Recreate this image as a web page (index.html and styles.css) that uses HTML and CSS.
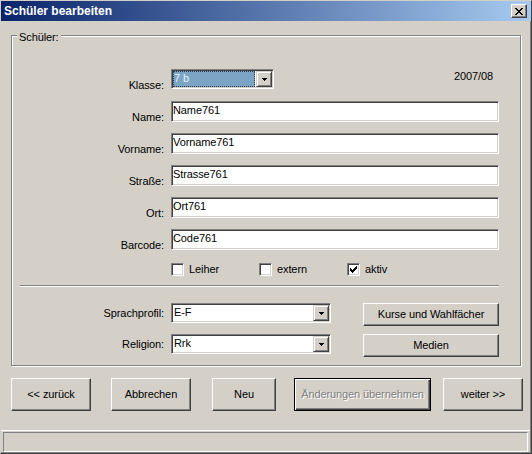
FILE: index.html
```html
<!DOCTYPE html>
<html>
<head>
<meta charset="utf-8">
<title>Schüler bearbeiten</title>
<link rel="stylesheet" href="styles.css">
</head>
<body>
<div class="window">
  <div class="titlebar">
    <span class="title">Schüler bearbeiten</span>
    <div class="close">
      <svg width="8" height="7" viewBox="0 0 8 7" shape-rendering="crispEdges"><path fill="#000" d="M0 0h2v1H0z M6 0h2v1H6z M1 1h2v1H1z M5 1h2v1H5z M2 2h4v1H2z M3 3h2v1H3z M2 4h4v1H2z M1 5h2v1H1z M5 5h2v1H5z M0 6h2v1H0z M6 6h2v1H6z"/></svg>
    </div>
  </div>
  <div class="client">
    <div class="group">
      <div class="legend">Schüler:</div>
      <div class="rows">
        <div class="row">
          <div class="lbl">Klasse:</div>
          <div class="combo combo-klasse">
            <div class="combo-text sel"><span>7 b</span></div>
            <div class="ddbtn"><svg width="5" height="3" viewBox="0 0 5 3" shape-rendering="crispEdges"><path fill="#000" d="M0 0h5v1H0z M1 1h3v1H1z M2 2h1v1H2z"/></svg></div>
          </div>
          <div class="year">2007/08</div>
        </div>
        <div class="row"><div class="lbl">Name:</div><div class="edit">Name761</div></div>
        <div class="row"><div class="lbl">Vorname:</div><div class="edit">Vorname761</div></div>
        <div class="row"><div class="lbl">Straße:</div><div class="edit">Strasse761</div></div>
        <div class="row"><div class="lbl">Ort:</div><div class="edit">Ort761</div></div>
        <div class="row"><div class="lbl">Barcode:</div><div class="edit">Code761</div></div>
      </div>
      <div class="checks">
        <div class="chk"><span class="box"></span><span>Leiher</span></div>
        <div class="chk"><span class="box"></span><span>extern</span></div>
        <div class="chk"><span class="box"><svg width="7" height="7" viewBox="0 0 7 7" shape-rendering="crispEdges"><path fill="#000" d="M6 0h1v1H6z M5 1h2v1H5z M0 2h1v1H0z M4 2h3v1H4z M0 3h2v1H0z M3 3h3v1H3z M0 4h5v1H0z M1 5h3v1H1z M2 6h1v1H2z"/></svg></span><span>aktiv</span></div>
      </div>
      <div class="sep"></div>
      <div class="lower">
        <div class="lbl2">Sprachprofil:</div>
        <div class="combo combo-wide">
          <div class="combo-text">E-F</div>
          <div class="ddbtn"><svg width="5" height="3" viewBox="0 0 5 3" shape-rendering="crispEdges"><path fill="#000" d="M0 0h5v1H0z M1 1h3v1H1z M2 2h1v1H2z"/></svg></div>
        </div>
        <div class="btn btn-side">Kurse und Wahlfächer</div>
        <div class="lbl2">Religion:</div>
        <div class="combo combo-wide">
          <div class="combo-text">Rrk</div>
          <div class="ddbtn"><svg width="5" height="3" viewBox="0 0 5 3" shape-rendering="crispEdges"><path fill="#000" d="M0 0h5v1H0z M1 1h3v1H1z M2 2h1v1H2z"/></svg></div>
        </div>
        <div class="btn btn-side">Medien</div>
      </div>
    </div>
    <div class="actions">
      <div class="btn act act-back">&lt;&lt; zurück</div>
      <div class="btn act act-cancel">Abbrechen</div>
      <div class="btn act act-new">Neu</div>
      <div class="btn act act-apply default disabled">Änderungen übernehmen</div>
      <div class="btn act act-next">weiter &gt;&gt;</div>
    </div>
    <div class="status-line"></div>
    <div class="status"></div>
  </div>
</div>
</body>
</html>
```

FILE: styles.css
```css
html, body {
  margin: 0;
  padding: 0;
}
body {
  width: 532px;
  height: 454px;
  overflow: hidden;
  background: #D4D0C8;
  font-family: "Liberation Sans", Arial, sans-serif;
  font-size: 11px;
  line-height: 13px;
  letter-spacing: -0.1px;
  color: #000;
}
.window {
  box-sizing: border-box;
  width: 532px;
  height: 454px;
  border-style: solid;
  border-width: 1px;
  border-color: #D4D0C8 #404040 #404040 #D4D0C8;
  background: #D4D0C8;
  display: flex;
  flex-direction: column;
}
.titlebar {
  height: 20px;
  flex: none;
  display: flex;
  align-items: center;
  background: linear-gradient(to right, #0A246A, #A6CAF0);
}
.title {
  padding-left: 3px;
  color: #fff;
  font-weight: bold;
  font-size: 12px;
  letter-spacing: 0;
  flex: 1;
}
.close {
  box-sizing: border-box;
  width: 16px;
  height: 14px;
  margin-right: 4px;
  background: #D4D0C8;
  border: 1px solid;
  border-color: #fff #404040 #404040 #fff;
  box-shadow: inset -1px -1px #808080;
  display: flex;
  align-items: center;
  justify-content: center;
  padding-right: 1px;
}
.close svg { display: block; }
.client {
  flex: 1;
  display: flex;
  flex-direction: column;
  border-right: 1px solid #808080;
  border-bottom: 1px solid #808080;
}
.group {
  position: relative;
  box-sizing: border-box;
  margin: 14px 0 0 10px;
  width: 510px;
  height: 331px;
  flex: none;
  border: 1px solid #808080;
  box-shadow: inset 1px 1px #fff, 1px 1px #fff;
  padding: 33px 20px 8px 8px;
  display: flex;
  flex-direction: column;
}
.legend {
  position: absolute;
  left: 5px;
  top: -5px;
  padding: 0 2px;
  background: #D4D0C8;
}
.rows {
  display: flex;
  flex-direction: column;
  gap: 11px;
}
.row {
  display: flex;
  height: 21px;
}
.lbl {
  flex: none;
  width: 144px;
  margin-right: 7px;
  text-align: right;
  padding-top: 10px;
}
.edit {
  box-sizing: border-box;
  width: 328px;
  height: 21px;
  background: #fff;
  border: 1px solid;
  border-color: #808080 #fff #fff #808080;
  box-shadow: inset 1px 1px #404040, inset -1px -1px #D4D0C8;
  padding: 2px 2px 0 1px;
  white-space: nowrap;
}
.combo {
  box-sizing: border-box;
  height: 20px;
  background: #fff;
  border: 1px solid;
  border-color: #808080 #fff #fff #808080;
  box-shadow: inset 1px 1px #404040, inset -1px -1px #D4D0C8;
  padding: 1px;
  display: flex;
}
.combo-klasse {
  width: 103px;
  flex: none;
}
.combo-wide {
  width: 160px;
  align-self: start;
}
.combo-text {
  flex: 1;
  padding-left: 1px;
  padding-top: 1px;
  white-space: nowrap;
}
.sel {
  box-sizing: border-box;
  background: #7BA4C5;
  color: #E6F4FF;
  border: 1px dotted #2a3a50;
  margin-right: 1px;
  padding-left: 0;
  padding-top: 0;
  line-height: 13px;
}
.ddbtn {
  box-sizing: border-box;
  width: 16px;
  height: 16px;
  flex: none;
  background: #D4D0C8;
  border: 1px solid;
  border-color: #D4D0C8 #404040 #404040 #D4D0C8;
  box-shadow: inset 1px 1px #fff, inset -1px -1px #808080;
  display: flex;
  align-items: center;
  justify-content: center;
}
.ddbtn svg { display: block; }
.year {
  margin-left: auto;
  margin-right: 7px;
  padding-top: 1px;
}
.checks {
  display: flex;
  height: 13px;
  margin-top: 13px;
  padding-left: 151px;
}
.chk {
  width: 88px;
  display: flex;
  align-items: center;
  gap: 5px;
}
.box {
  box-sizing: border-box;
  width: 13px;
  height: 13px;
  flex: none;
  background: #fff;
  border: 1px solid;
  border-color: #808080 #fff #fff #808080;
  box-shadow: inset 1px 1px #404040, inset -1px -1px #D4D0C8;
  padding: 2px;
}
.box svg { display: block; }
.sep {
  width: 479px;
  height: 0;
  margin-top: 9px;
  border-top: 1px solid #808080;
  border-bottom: 1px solid #fff;
}
.lower {
  margin-top: 16px;
  display: grid;
  grid-template-columns: 151px 192px 136px;
  grid-template-rows: 23px 23px;
  row-gap: 8px;
}
.lbl2 {
  text-align: right;
  padding-right: 7px;
  line-height: 20px;
}
.btn {
  box-sizing: border-box;
  background: #D4D0C8;
  border: 1px solid;
  border-color: #fff #404040 #404040 #fff;
  box-shadow: inset -1px -1px #808080;
  display: flex;
  align-items: center;
  justify-content: center;
  white-space: nowrap;
}
.btn-side {
  width: 136px;
  height: 23px;
}
.actions {
  display: flex;
  margin-top: 12px;
  padding-left: 10px;
  height: 33px;
  flex: none;
}
.act { height: 33px; }
.act-back { width: 80px; }
.act-cancel { width: 80px; margin-left: 20px; }
.act-new { width: 64px; margin-left: 21px; }
.act-apply { width: 137px; margin-left: 18px; }
.act-next { width: 80px; margin-left: 12px; }
.default {
  border-color: #000;
  box-shadow: inset 1px 1px #fff, inset -1px -1px #404040, inset -2px -2px #808080;
}
.disabled {
  color: #808080;
  text-shadow: 1px 1px #fff;
}
.status-line {
  margin-top: 19px;
  height: 1px;
  background: #fff;
  flex: none;
}
.status {
  box-sizing: border-box;
  margin: 1px 2px 0 2px;
  height: 20px;
  flex: none;
  border: 1px solid;
  border-color: #808080 #fff #fff #808080;
}
```
